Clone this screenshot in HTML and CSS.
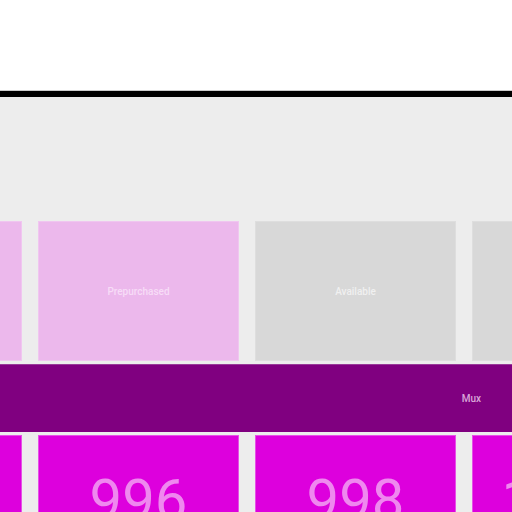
FILE: index.html
```html
<!DOCTYPE html>
<html>
<head>
    <title>Tiles</title>
    <link rel="stylesheet" href="styles.css">
</head>
<body>
    <div class="top"></div>
    <div class="board">
        <div class="row">
            <div class="tile tile-pre"></div>
            <div class="tile tile-pre">Prepurchased</div>
            <div class="tile tile-avail">Available</div>
            <div class="tile tile-avail"></div>
        </div>
        <div class="bar">Mux</div>
        <div class="row row-nums">
            <div class="tile tile-num">994</div>
            <div class="tile tile-num">996</div>
            <div class="tile tile-num">998</div>
            <div class="tile tile-num">1,000</div>
        </div>
    </div>
</body>
</html>
```

FILE: styles.css
```css
body {
    margin: 0;
    background: #fff;
    font-family: Roboto, "Liberation Sans", sans-serif;
    overflow: hidden;
}

.top {
    height: 90px;
    border-bottom: 1px solid #ccc;
}

.board {
    background: #ededed;
    border-top: 6px solid #000;
    padding-top: 124px;
    height: 400px;
}

.row {
    display: flex;
    gap: 16px;
    margin-left: -179px;
    height: 140px;
}

.tile {
    flex: 0 0 201px;
    box-sizing: border-box;
    display: flex;
    align-items: center;
    justify-content: center;
    font-size: 10px;
    font-weight: 500;
}

.tile-pre {
    background: #ecb8ec;
    border: 1px solid #f0c6f0;
    color: #f7dcf7;
}

.tile-avail {
    background: #d8d8d8;
    border: 1px solid #dedede;
    color: #f0f0f0;
}

.bar {
    margin-top: 3px;
    height: 68px;
    background: #800080;
    border-top: 1px solid #9a3a9a;
    box-sizing: border-box;
    display: flex;
    align-items: center;
    justify-content: flex-end;
    padding-right: 31px;
    font-size: 10px;
    font-weight: 500;
    color: #d9a6d9;
}

.row-nums {
    margin-top: 3px;
}

.tile-num {
    background: #dd00dd;
    border: 1px solid #e650e6;
    color: #ef88ef;
    font-size: 58px;
    font-weight: 400;
    padding-bottom: 10px;
}
```
